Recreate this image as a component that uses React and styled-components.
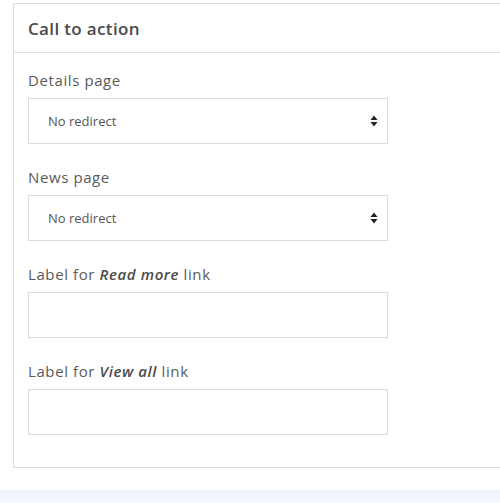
import React from "react";
import styled, { createGlobalStyle } from "styled-components";

const Global = createGlobalStyle`
  html, body { margin: 0; padding: 0; background: #fff; }
  body { font-family: "Open Sans", "Liberation Sans", sans-serif; overflow: hidden; }
  * { box-sizing: border-box; }
`;

const Page = styled.div`
  width: 500px;
  height: 503px;
  overflow: hidden;
  padding-top: 3px;
  background: #fff;
`;

const Panel = styled.section`
  margin-left: 13px;
  width: 520px;
  border: 1px solid #dddddd;
  background: #fff;
`;

const Header = styled.header`
  height: 49px;
  border-bottom: 1px solid #e2e2e2;
  display: flex;
  align-items: center;
  padding-left: 14px;
  font-size: 17px;
  font-weight: 600;
  color: #4a4a4a;
  letter-spacing: 0.35px;
`;

const Body = styled.div`
  padding: 17px 14px 32px;
  display: flex;
  flex-direction: column;
  gap: 23px;
`;

const Field = styled.div`
  display: flex;
  flex-direction: column;
  gap: 8px;
`;

const Label = styled.label`
  font-size: 15px;
  line-height: 20px;
  color: #5a5a5a;
  letter-spacing: 0.6px;
  em {
    font-style: italic;
    font-weight: 600;
    color: #4a4a4a;
  }
`;

const Box = styled.div`
  width: 360px;
  height: 46px;
  border: 1px solid #dcdcdc;
  background: #fff;
  display: flex;
  align-items: center;
  justify-content: space-between;
  padding: 0 9px 0 19px;
  font-size: 13px;
  color: #555;
`;

const Footer = styled.div`
  margin-top: 22px;
  height: 14px;
  background: linear-gradient(#edf2fc, #f7f9fe);
`;

const Arrows = () => (
  <svg width="8" height="12" viewBox="0 0 8 12">
    <path d="M4 0.5 L7.5 5 H0.5 Z" fill="#222" />
    <path d="M4 11.5 L7.5 7 H0.5 Z" fill="#222" />
  </svg>
);

const SelectField = ({ label, value }) => (
  <Field>
    <Label>{label}</Label>
    <Box>
      <span>{value}</span>
      <Arrows />
    </Box>
  </Field>
);

const TextField = ({ children }) => (
  <Field>
    <Label>{children}</Label>
    <Box />
  </Field>
);

export default function App() {
  return (
    <Page>
      <Global />
      <Panel>
        <Header>Call to action</Header>
        <Body>
          <SelectField label="Details page" value="No redirect" />
          <SelectField label="News page" value="No redirect" />
          <TextField>
            Label for <em>Read more</em> link
          </TextField>
          <TextField>
            Label for <em>View all</em> link
          </TextField>
        </Body>
      </Panel>
      <Footer />
    </Page>
  );
}
